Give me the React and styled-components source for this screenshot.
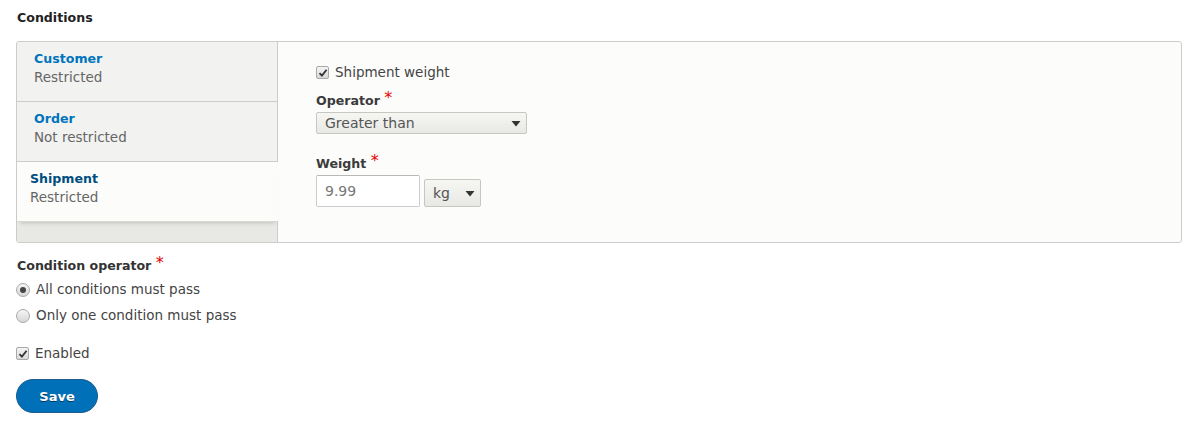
import styled, { createGlobalStyle } from "styled-components";

const GlobalStyle = createGlobalStyle`
  body {
    margin: 0;
    background: #ffffff;
    font-family: "DejaVu Sans", "Liberation Sans", sans-serif;
    color: #333333;
  }
`;

function CheckIcon() {
  return (
    <svg width="10" height="10" viewBox="0 0 10 10">
      <path d="M1.5 5.2 L3.9 7.6 L8.6 1.8" fill="none" stroke="#333" strokeWidth="1.8" />
    </svg>
  );
}

function Arrow() {
  return (
    <svg width="10" height="6" viewBox="0 0 10 6">
      <path d="M0.5 0 H9.5 L5 5.5 Z" fill="#333" />
    </svg>
  );
}

function Checkbox({ label }) {
  return (
    <CheckRow>
      <Box>
        <CheckIcon />
      </Box>
      <OptionText>{label}</OptionText>
    </CheckRow>
  );
}

function Radio({ label, checked }) {
  return (
    <CheckRow>
      <Circle $checked={checked} />
      <OptionText>{label}</OptionText>
    </CheckRow>
  );
}

const tabs = [
  { title: "Customer", summary: "Restricted" },
  { title: "Order", summary: "Not restricted" },
  { title: "Shipment", summary: "Restricted", selected: true },
];

export default function App() {
  return (
    <Page>
      <GlobalStyle />
      <Heading>Conditions</Heading>
      <VerticalTabs>
        <Menu>
          {tabs.map((t) => (
            <Tab key={t.title} $selected={t.selected}>
              <TabTitle $selected={t.selected}>{t.title}</TabTitle>
              <TabSummary>{t.summary}</TabSummary>
            </Tab>
          ))}
        </Menu>
        <Pane>
          <Checkbox label="Shipment weight" />
          <Field>
            <Label>
              Operator <Req>*</Req>
            </Label>
            <Select $width="211px" $height="22px">
              <span>Greater than</span>
              <Arrow />
            </Select>
          </Field>
          <Field $top="17px">
            <Label>
              Weight <Req>*</Req>
            </Label>
            <Inline>
              <TextInput>9.99</TextInput>
              <Select $width="57px" $height="28px">
                <span>kg</span>
                <Arrow />
              </Select>
            </Inline>
          </Field>
        </Pane>
      </VerticalTabs>
      <OperatorLabel>
        Condition operator <Req>*</Req>
      </OperatorLabel>
      <Radios>
        <Radio label="All conditions must pass" checked />
        <Radio label="Only one condition must pass" />
      </Radios>
      <Enabled>
        <Checkbox label="Enabled" />
      </Enabled>
      <SaveButton>Save</SaveButton>
    </Page>
  );
}

const Page = styled.div`
  padding: 8px 0 16px 16px;
  width: 1166px;
`;

const Heading = styled.h3`
  margin: 0 0 14px 1px;
  font-size: 12.6px;
  font-weight: bold;
  line-height: 19px;
  color: #222;
`;

const VerticalTabs = styled.div`
  display: flex;
  height: 200px;
  border: 1px solid #cccccc;
  border-radius: 3px;
  background: #fcfcfa;
`;

const Menu = styled.ul`
  list-style: none;
  margin: 0;
  padding: 0;
  width: 260px;
  flex-shrink: 0;
  background: #e8e8e5;
  border-right: 1px solid #cccccc;
  border-radius: 3px 0 0 3px;
`;

const Tab = styled.li`
  position: relative;
  padding: ${(p) => (p.$selected ? "7px 12px 13px 13px" : "7px 12px 13px 17px")};
  height: 39px;
  background: ${(p) => (p.$selected ? "#fcfcfa" : "#f2f2f0")};
  border-bottom: 1px solid #cccccc;
  margin-right: ${(p) => (p.$selected ? "-1px" : "0")};
  z-index: ${(p) => (p.$selected ? 1 : 0)};
  box-shadow: ${(p) =>
    p.$selected ? "0 4px 4px -3px rgba(0, 0, 0, 0.18)" : "none"};
  ${(p) => p.$selected && "border-bottom-color: #d8d8d5;"}
  &:first-child {
    border-radius: 3px 0 0 0;
  }
`;

const TabTitle = styled.div`
  font-size: 12.6px;
  font-weight: bold;
  line-height: 19px;
  color: ${(p) => (p.$selected ? "#004f80" : "#0074bd")};
`;

const TabSummary = styled.div`
  font-size: 13.5px;
  line-height: 19px;
  color: #666666;
`;

const Pane = styled.div`
  flex: 1;
  padding: 21px 0 0 38px;
`;

const CheckRow = styled.label`
  display: flex;
  align-items: center;
  gap: 6px;
  height: 19px;
`;

const Box = styled.span`
  display: flex;
  align-items: center;
  justify-content: center;
  width: 11px;
  height: 11px;
  border: 1px solid #a9a9a9;
  border-radius: 2px;
  background: linear-gradient(#f4f4f4, #d8d8d8);
`;

const Circle = styled.span`
  position: relative;
  width: 12px;
  height: 12px;
  border: 1px solid #a9a9a9;
  border-radius: 50%;
  background: linear-gradient(#f6f6f6, #d6d6d6);
  &::after {
    content: "";
    position: absolute;
    left: 3px;
    top: 3px;
    width: 6px;
    height: 6px;
    border-radius: 50%;
    background: ${(p) => (p.$checked ? "#444" : "transparent")};
  }
`;

const OptionText = styled.span`
  font-size: 13.5px;
  line-height: 19px;
  color: #444444;
`;

const Field = styled.div`
  margin-top: ${(p) => p.$top || "6px"};
  display: flex;
  flex-direction: column;
  align-items: flex-start;
`;

const Label = styled.div`
  font-size: 12.6px;
  font-weight: bold;
  line-height: 19px;
  color: #3b3b3b;
  margin-bottom: 2px;
`;

const Req = styled.span`
  color: #e60000;
  font-size: 16px;
  font-weight: normal;
  vertical-align: 2px;
`;

const Select = styled.div`
  box-sizing: border-box;
  display: flex;
  align-items: center;
  justify-content: space-between;
  width: ${(p) => p.$width};
  height: ${(p) => p.$height};
  padding: 0 5px 0 8px;
  border: 1px solid #c6c6c2;
  border-radius: 2px;
  background: linear-gradient(#f6f6f3, #e8e8e4);
  font-size: 14px;
  color: #555555;
  svg {
    margin-top: 1px;
  }
`;

const Inline = styled.div`
  display: flex;
  align-items: flex-end;
  gap: 4px;
`;

const TextInput = styled.div`
  box-sizing: border-box;
  display: flex;
  align-items: center;
  width: 104px;
  height: 32px;
  padding: 0 8px;
  border: 1px solid #cccccc;
  border-top-color: #b8b8b8;
  border-radius: 2px;
  background: #ffffff;
  font-size: 14px;
  color: #777777;
`;

const OperatorLabel = styled.div`
  margin: 10px 0 0 1px;
  font-size: 12.6px;
  font-weight: bold;
  line-height: 19px;
  color: #333;
`;

const Radios = styled.div`
  margin-top: 5px;
  display: flex;
  flex-direction: column;
  gap: 7px;
`;

const Enabled = styled.div`
  margin-top: 19px;
`;

const SaveButton = styled.button`
  margin-top: 16px;
  width: 82px;
  height: 34px;
  border: 1px solid #1e5c90;
  border-radius: 20em;
  background: #0071b8;
  color: #ffffff;
  font-family: "DejaVu Sans", sans-serif;
  font-size: 13px;
  font-weight: bold;
  text-shadow: 0 1px rgba(0, 0, 0, 0.5);
  cursor: pointer;
`;
